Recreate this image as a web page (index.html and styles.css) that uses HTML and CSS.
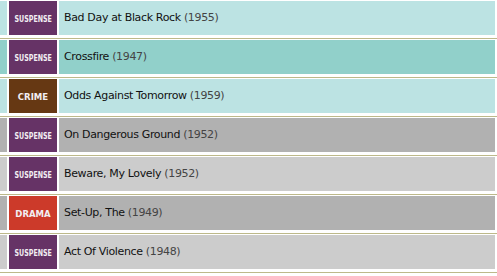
FILE: index.html
```html
<!DOCTYPE html>
<html>
<head>
<meta charset="utf-8">
<link rel="stylesheet" href="styles.css">
</head>
<body>
<ul class="films">
  <li class="film"><div class="row teal-light"><span class="genre suspense"><span class="squeeze">SUSPENSE</span></span><span class="title">Bad Day at Black Rock <span class="year">(1955)</span></span></div></li>
  <li class="film"><div class="row teal"><span class="genre suspense"><span class="squeeze">SUSPENSE</span></span><span class="title">Crossfire <span class="year">(1947)</span></span></div></li>
  <li class="film"><div class="row teal-light"><span class="genre crime">CRIME</span><span class="title">Odds Against Tomorrow <span class="year">(1959)</span></span></div></li>
  <li class="film"><div class="row grey"><span class="genre suspense"><span class="squeeze">SUSPENSE</span></span><span class="title">On Dangerous Ground <span class="year">(1952)</span></span></div></li>
  <li class="film"><div class="row grey-light"><span class="genre suspense"><span class="squeeze">SUSPENSE</span></span><span class="title">Beware, My Lovely <span class="year">(1952)</span></span></div></li>
  <li class="film"><div class="row grey"><span class="genre drama">DRAMA</span><span class="title">Set-Up, The <span class="year">(1949)</span></span></div></li>
  <li class="film"><div class="row grey-light"><span class="genre suspense"><span class="squeeze">SUSPENSE</span></span><span class="title">Act Of Violence <span class="year">(1948)</span></span></div></li>
</ul>
</body>
</html>
```
FILE: styles.css
```css
html, body {
  margin: 0;
  padding: 0;
  background: #ffffff;
}
.films {
  list-style: none;
  margin: 0;
  padding: 0;
  font-family: "DejaVu Sans", Verdana, sans-serif;
}
.film {
  padding: 1px 0 1px;
  border-bottom: 1px solid #bdb98a;
}
.row {
  display: flex;
  align-items: stretch;
  height: 34px;
  margin: 0 2px 2px 0;
  padding-left: 7px;
}
.teal-light { background: #bce3e3; }
.teal { background: #91d0ca; }
.grey { background: #b1b1b1; }
.grey-light { background: #cccccc; }
.genre {
  flex: 0 0 48px;
  display: flex;
  align-items: center;
  justify-content: center;
  border-left: 2px solid #ffffff;
  border-right: 2px solid #ffffff;
  color: #f2eef2;
  font-family: "DejaVu Sans Condensed", "DejaVu Sans", sans-serif;
  font-stretch: condensed;
  font-weight: bold;
  font-size: 9.5px;
  overflow: hidden;
}
.squeeze {
  display: inline-block;
  transform: scaleX(0.74);
  white-space: nowrap;
}
.suspense { background: #663366; }
.crime { background: #663813; }
.drama { background: #cc3a2a; }
.title {
  display: block;
  align-self: center;
  padding-left: 5px;
  font-size: 11px;
  letter-spacing: -0.35px;
  line-height: 14px;
  color: #111111;
  white-space: nowrap;
}
.year {
  color: #444444;
}
```
